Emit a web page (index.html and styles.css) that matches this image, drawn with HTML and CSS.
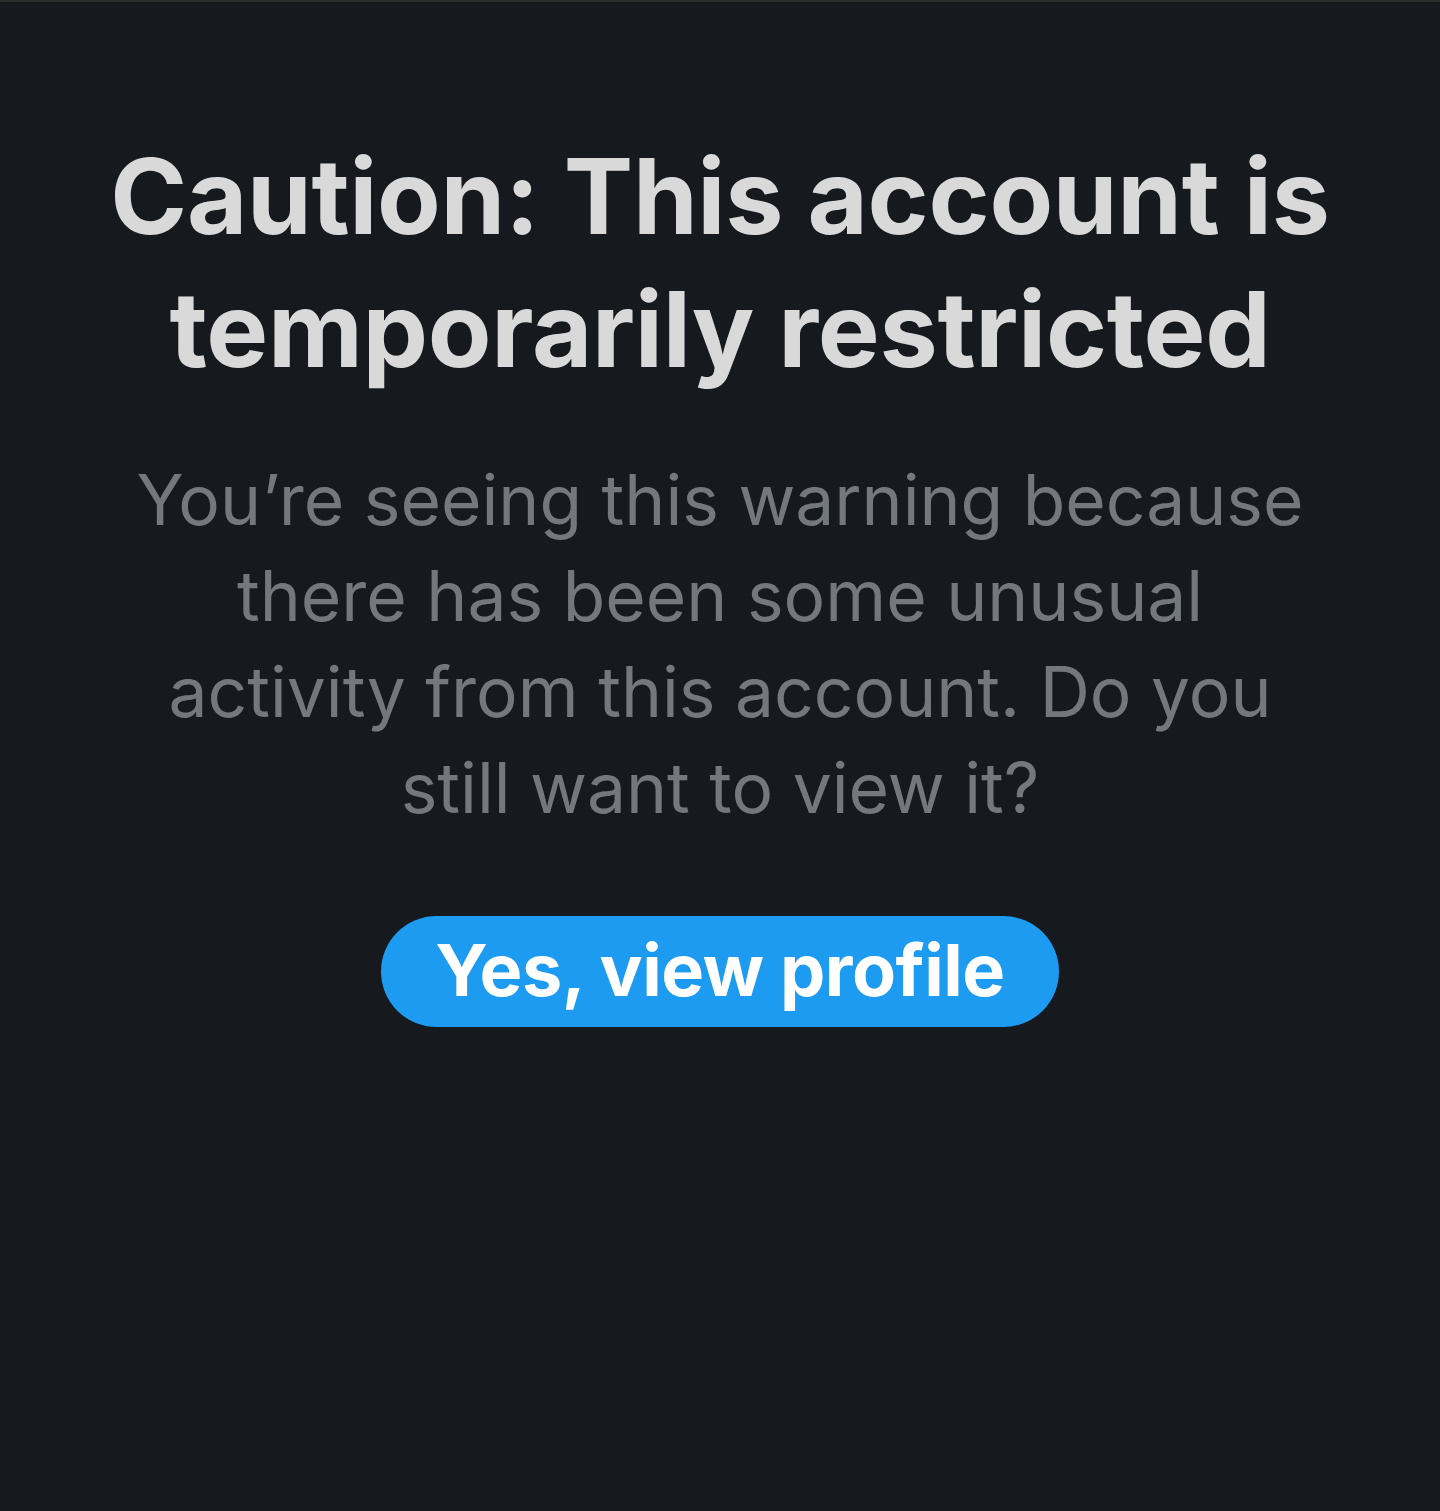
FILE: index.html
```html
<!DOCTYPE html>
<html lang="en">
<head>
<meta charset="utf-8">
<title>Caution</title>
<link rel="stylesheet" href="styles.css">
</head>
<body>
<main class="screen">
  <section class="notice">
    <h1 class="notice-title">Caution: This account is temporarily restricted</h1>
    <p class="notice-text">You’re seeing this warning because there has been some unusual activity from this account. Do you still want to view it?</p>
    <button class="notice-btn" type="button">Yes, view profile</button>
  </section>
</main>
</body>
</html>
```

FILE: styles.css
```css
* { box-sizing: border-box; }
html, body {
  margin: 0;
  padding: 0;
  background: #16191e;
}
body {
  font-family: Inter, "Noto Sans", "Liberation Sans", sans-serif;
  min-height: 1511px;
  border-top: 2px solid #2b2c2e;
}
.screen {
  display: flex;
  justify-content: center;
  padding-top: 128px;
}
.notice {
  width: 1240px;
  display: flex;
  flex-direction: column;
  align-items: center;
  text-align: center;
}
.notice-title {
  margin: 0;
  color: #d9d9d9;
  font-size: 104px;
  line-height: 133px;
  font-weight: 700;
  letter-spacing: -0.3px;
}
.notice-text {
  margin: 56px 0 0;
  color: #74787d;
  font-size: 69.5px;
  line-height: 96px;
  font-weight: 400;
  width: 1180px;
}
.notice-btn {
  margin-top: 80px;
  width: 678px;
  height: 111px;
  border: none;
  border-radius: 56px;
  background: #1d9bf0;
  color: #ffffff;
  font-family: inherit;
  font-size: 72px;
  font-weight: 700;
  padding: 0 0 4px;
  letter-spacing: -0.5px;
}
```
